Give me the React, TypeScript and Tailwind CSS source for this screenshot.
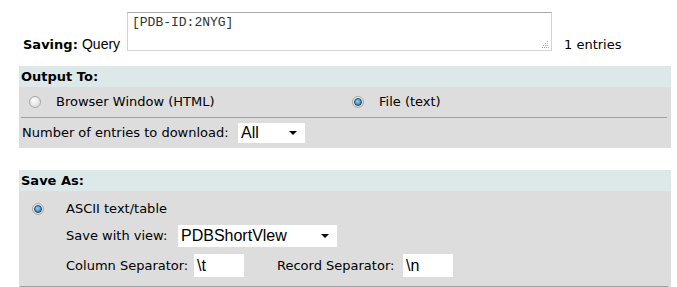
import React from "react";

function Radio({ checked }: { checked?: boolean }) {
  return (
    <span className="relative inline-flex h-[12px] w-[12px] shrink-0 items-center justify-center rounded-full border border-[#a8a8a8] bg-[radial-gradient(circle_at_40%_35%,#ffffff,#cfcfcf)]">
      {checked && (
        <span className="h-[8px] w-[8px] rounded-full border border-[#163f63] bg-[radial-gradient(circle_at_40%_35%,#8fd0f5,#1f6fb0)]" />
      )}
    </span>
  );
}

function Dropdown({ value, width }: { value: string; width: string }) {
  return (
    <div
      className={`flex h-full items-center justify-between bg-white pl-[3px] pr-[8px] font-['Liberation_Sans',Arial,sans-serif] text-[16px] text-black ${width}`}
    >
      <span>{value}</span>
      <svg width="8" height="4" viewBox="0 0 8 4">
        <path d="M0 0h8L4 4z" fill="#000" />
      </svg>
    </div>
  );
}

function Header({ title }: { title: string }) {
  return (
    <div className="flex h-[21px] items-center bg-[#dde9e9] pl-[2px] text-[13px] font-bold text-black">
      {title}
    </div>
  );
}

function Grip() {
  return (
    <svg className="absolute bottom-[3px] right-[3px]" width="7" height="7" viewBox="0 0 7 7">
      <g fill="#b0b0b0">
        <rect x="5" y="0" width="1" height="1" />
        <rect x="3" y="2" width="1" height="1" />
        <rect x="5" y="2" width="1" height="1" />
        <rect x="1" y="4" width="1" height="1" />
        <rect x="3" y="4" width="1" height="1" />
        <rect x="5" y="4" width="1" height="1" />
        <rect x="0" y="6" width="1" height="1" />
        <rect x="2" y="6" width="1" height="1" />
        <rect x="4" y="6" width="1" height="1" />
        <rect x="6" y="6" width="1" height="1" />
      </g>
    </svg>
  );
}

export default function App() {
  return (
    <div className="h-[287px] w-[677px] overflow-hidden bg-white font-['Verdana','DejaVu_Sans',sans-serif] text-[13px] text-black">
      {/* Saving row */}
      <div className="flex items-end pl-[23px] pt-[12px]">
        <span className="mb-[-2px] w-[104px] leading-[16px]">
          <b>Saving:</b>{" "}
          <span className="font-['Liberation_Sans',Arial,sans-serif] text-[14px]">Query</span>
        </span>
        <div className="relative">
          <textarea
            readOnly
            defaultValue="[PDB-ID:2NYG]"
            className="block h-[39px] w-[425px] resize-none border border-[#d4d4d4] border-t-[#a9a9a9] bg-white px-[4px] py-[2px] font-['Liberation_Mono','Courier_New',monospace] text-[13px] leading-[16px] text-[#333] outline-none"
          />
          <Grip />
        </div>
        <span className="mb-[-2px] ml-[12px] leading-[16px]">1 entries</span>
      </div>

      {/* Output To */}
      <section className="ml-[19px] mt-[15px] w-[652px]">
        <Header title="Output To:" />
        <div className="bg-[#dddddd]">
          <div className="flex h-[30px] items-center">
            <label className="flex w-[333px] items-center gap-[15px] pl-[10px]">
              <Radio />
              <span>Browser Window (HTML)</span>
            </label>
            <label className="flex items-center gap-[15px]">
              <Radio checked />
              <span>File (text)</span>
            </label>
          </div>
          <div className="ml-[2px] mr-[4px] h-px bg-[#a0a0a0]" />
          <div className="flex h-[30px] items-center pl-[3px]">
            <span className="w-[216px]">Number of entries to download:</span>
            <div className="h-[20px]">
              <Dropdown value="All" width="w-[67px]" />
            </div>
          </div>
        </div>
      </section>

      {/* Save As */}
      <section className="ml-[19px] mt-[22px] w-[652px]">
        <Header title="Save As:" />
        <div className="bg-[#dddddd] pt-[8px]">
          <div className="flex h-[20px] items-center gap-[22px] pl-[13px]">
            <Radio checked />
            <span>ASCII text/table</span>
          </div>
          <div className="mt-[6px] flex h-[22px] items-center pl-[47px]">
            <span className="w-[112px]">Save with view:</span>
            <Dropdown value="PDBShortVlew" width="w-[159px]" />
          </div>
          <div className="mt-[7px] flex h-[23px] items-center pl-[47px]">
            <span className="w-[128px]">Column Separator:</span>
            <div className="flex h-full w-[50px] items-center bg-white pl-[3px] font-['Liberation_Sans',Arial,sans-serif] text-[16px]">
              \t
            </div>
            <span className="ml-[33px] w-[126px]">Record Separator:</span>
            <div className="flex h-full w-[50px] items-center bg-white pl-[3px] font-['Liberation_Sans',Arial,sans-serif] text-[16px]">
              \n
            </div>
          </div>
          <div className="ml-[1px] mr-[3px] mt-[9px] h-px bg-[#a0a0a0]" />
          <div className="h-[10px]" />
        </div>
      </section>
    </div>
  );
}
